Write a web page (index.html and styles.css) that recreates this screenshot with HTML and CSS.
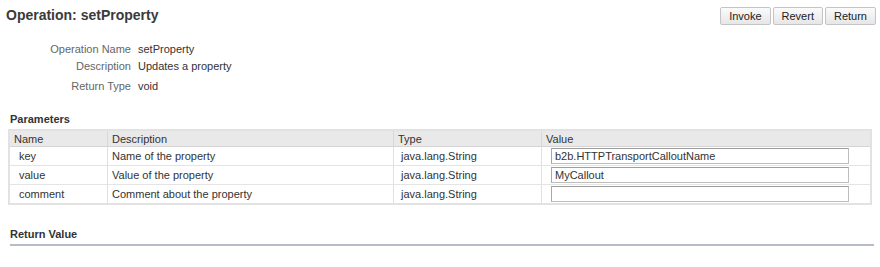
FILE: index.html
```html
<!DOCTYPE html>
<html lang="en">
<head>
    <meta charset="UTF-8">
    <link rel="stylesheet" href="styles.css">
    <title>Operation: setProperty</title>
</head>
<body>
    <div class="page">
        <div class="header">
            <h1>Operation: setProperty</h1>
            <div class="actions">
                <button type="button">Invoke</button>
                <button type="button">Revert</button>
                <button type="button">Return</button>
            </div>
        </div>

        <div class="info">
            <div class="info-row">
                <span class="info-label">Operation Name</span>
                <span class="info-value">setProperty</span>
            </div>
            <div class="info-row">
                <span class="info-label">Description</span>
                <span class="info-value">Updates a property</span>
            </div>
            <div class="info-row">
                <span class="info-label">Return Type</span>
                <span class="info-value">void</span>
            </div>
        </div>

        <h2 class="section-title">Parameters</h2>
        <table class="params">
            <thead>
                <tr>
                    <th class="col-name">Name</th>
                    <th class="col-desc">Description</th>
                    <th class="col-type">Type</th>
                    <th class="col-value">Value</th>
                </tr>
            </thead>
            <tbody>
                <tr>
                    <td class="name">key</td>
                    <td>Name of the property</td>
                    <td class="type">java.lang.String</td>
                    <td><input type="text" value="b2b.HTTPTransportCalloutName"></td>
                </tr>
                <tr>
                    <td class="name">value</td>
                    <td>Value of the property</td>
                    <td class="type">java.lang.String</td>
                    <td><input type="text" value="MyCallout"></td>
                </tr>
                <tr>
                    <td class="name">comment</td>
                    <td>Comment about the property</td>
                    <td class="type">java.lang.String</td>
                    <td><input type="text" value=""></td>
                </tr>
            </tbody>
        </table>

        <h2 class="section-title return-title">Return Value</h2>
    </div>
</body>
</html>
```

FILE: styles.css
```css
body {
    font-family: 'Liberation Sans', Arial, sans-serif;
    font-size: 11px;
    color: #333;
    background-color: #fff;
    margin: 0;
    padding: 0;
}

.page {
    padding: 0 4px 0 6px;
}

.header {
    display: flex;
    justify-content: space-between;
    align-items: flex-start;
    height: 40px;
}

h1 {
    margin: 7px 0 0 0;
    font-size: 14px;
    font-weight: bold;
    color: #3a3a3a;
}

.actions {
    display: flex;
    gap: 2px;
    margin-top: 7px;
}

button {
    font-family: 'Liberation Sans', Arial, sans-serif;
    font-size: 11px;
    color: #222;
    height: 18px;
    padding: 0 8px;
    border: 1px solid #c4c4c4;
    border-radius: 2px;
    background: linear-gradient(#fbfbfb, #e6e6e6);
    cursor: pointer;
}

.info {
    display: flex;
    flex-direction: column;
    padding-top: 3px;
}

.info-row {
    display: flex;
    gap: 7px;
    height: 17px;
    line-height: 13px;
}

.info-row:nth-child(2) {
    height: 20px;
}

.info-label {
    width: 125px;
    text-align: right;
    color: #666;
}

.info-value {
    color: #333;
}

.section-title {
    margin: 16px 0 4px 4px;
    font-size: 11px;
    font-weight: bold;
    color: #333;
}

.params {
    margin-left: 2px;
    width: 864px;
    border-collapse: collapse;
    border: 2px solid #e2e2e2;
}

.params th {
    background-color: #e9e9e9;
    font-weight: normal;
    text-align: left;
    height: 15px;
    padding: 0 4px;
    border-left: 1px solid #d8d8d8;
    border-bottom: 1px solid #d4d4d4;
    color: #333;
}

.params td {
    height: 17px;
    padding: 0 4px;
    border-left: 1px solid #e0e0e0;
    border-bottom: 1px solid #e4e4e4;
}

.params td.name {
    padding-left: 9px;
}

.params td.type {
    padding-left: 7px;
}

.col-name {
    width: 89px;
}

.col-desc {
    width: 277px;
}

.col-type {
    width: 139px;
}

.params input {
    display: block;
    width: 298px;
    height: 16px;
    box-sizing: border-box;
    margin: 1px 0 1px 5px;
    padding: 0 3px;
    font-family: 'Liberation Sans', Arial, sans-serif;
    font-size: 11px;
    color: #333;
    border: 1px solid #bdbdbd;
    border-top-color: #9e9e9e;
    border-left-color: #a8a8a8;
}

.return-title {
    margin: 23px 0 0 4px;
    padding-bottom: 4px;
    width: 864px;
    border-bottom: 2px solid #b8bcc8;
}
```
